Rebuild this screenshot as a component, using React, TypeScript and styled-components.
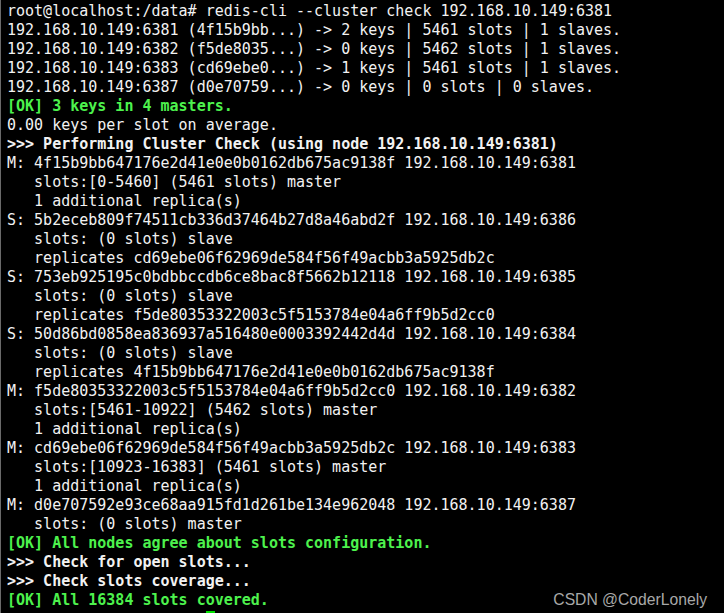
import React from "react";
import styled, { createGlobalStyle } from "styled-components";

const Global = createGlobalStyle`
  html, body { margin: 0; padding: 0; background: #000; }
  body { width: 724px; height: 613px; overflow: hidden; }
`;

const Terminal = styled.div`
  position: relative;
  width: 724px;
  height: 613px;
  box-sizing: border-box;
  background: #000;
  padding: 2px 0 0 6px;
  border-left: 1px solid #6a6a6a;
  overflow: hidden;
`;

const Output = styled.pre`
  margin: 0;
  font-family: "DejaVu Sans Mono", "Liberation Mono", monospace;
  font-size: 15px;
  line-height: 19px;
  color: #f2f2f2;
  white-space: pre;
`;

type Kind = "plain" | "bold" | "ok";

const Line = styled.div<{ $kind: Kind }>`
  height: 19px;
  color: ${(p) => (p.$kind === "ok" ? "#4df24d" : "#f2f2f2")};
  font-weight: ${(p) => (p.$kind === "plain" ? 400 : 700)};
`;

const Cursor = styled.span`
  display: inline-block;
  width: 9px;
  height: 19px;
  vertical-align: top;
  margin-top: 1px;
  background: #00e000;
`;

const Watermark = styled.div`
  position: absolute;
  right: 17px;
  bottom: 4px;
  font-family: "Liberation Sans", Arial, sans-serif;
  font-size: 15.7px;
  color: #a8a8a8;
`;

const lines: { kind: Kind; text: string }[] = [
  { kind: "plain", text: "root@localhost:/data# redis-cli --cluster check 192.168.10.149:6381" },
  { kind: "plain", text: "192.168.10.149:6381 (4f15b9bb...) -> 2 keys | 5461 slots | 1 slaves." },
  { kind: "plain", text: "192.168.10.149:6382 (f5de8035...) -> 0 keys | 5462 slots | 1 slaves." },
  { kind: "plain", text: "192.168.10.149:6383 (cd69ebe0...) -> 1 keys | 5461 slots | 1 slaves." },
  { kind: "plain", text: "192.168.10.149:6387 (d0e70759...) -> 0 keys | 0 slots | 0 slaves." },
  { kind: "ok", text: "[OK] 3 keys in 4 masters." },
  { kind: "plain", text: "0.00 keys per slot on average." },
  { kind: "bold", text: ">>> Performing Cluster Check (using node 192.168.10.149:6381)" },
  { kind: "plain", text: "M: 4f15b9bb647176e2d41e0e0b0162db675ac9138f 192.168.10.149:6381" },
  { kind: "plain", text: "   slots:[0-5460] (5461 slots) master" },
  { kind: "plain", text: "   1 additional replica(s)" },
  { kind: "plain", text: "S: 5b2eceb809f74511cb336d37464b27d8a46abd2f 192.168.10.149:6386" },
  { kind: "plain", text: "   slots: (0 slots) slave" },
  { kind: "plain", text: "   replicates cd69ebe06f62969de584f56f49acbb3a5925db2c" },
  { kind: "plain", text: "S: 753eb925195c0bdbbccdb6ce8bac8f5662b12118 192.168.10.149:6385" },
  { kind: "plain", text: "   slots: (0 slots) slave" },
  { kind: "plain", text: "   replicates f5de80353322003c5f5153784e04a6ff9b5d2cc0" },
  { kind: "plain", text: "S: 50d86bd0858ea836937a516480e0003392442d4d 192.168.10.149:6384" },
  { kind: "plain", text: "   slots: (0 slots) slave" },
  { kind: "plain", text: "   replicates 4f15b9bb647176e2d41e0e0b0162db675ac9138f" },
  { kind: "plain", text: "M: f5de80353322003c5f5153784e04a6ff9b5d2cc0 192.168.10.149:6382" },
  { kind: "plain", text: "   slots:[5461-10922] (5462 slots) master" },
  { kind: "plain", text: "   1 additional replica(s)" },
  { kind: "plain", text: "M: cd69ebe06f62969de584f56f49acbb3a5925db2c 192.168.10.149:6383" },
  { kind: "plain", text: "   slots:[10923-16383] (5461 slots) master" },
  { kind: "plain", text: "   1 additional replica(s)" },
  { kind: "plain", text: "M: d0e707592e93ce68aa915fd1d261be134e962048 192.168.10.149:6387" },
  { kind: "plain", text: "   slots: (0 slots) master" },
  { kind: "ok", text: "[OK] All nodes agree about slots configuration." },
  { kind: "bold", text: ">>> Check for open slots..." },
  { kind: "bold", text: ">>> Check slots coverage..." },
  { kind: "ok", text: "[OK] All 16384 slots covered." },
];

export default function App() {
  return (
    <>
      <Global />
      <Terminal>
        <Output>
          {lines.map((l, i) => (
            <Line key={i} $kind={l.kind}>
              {l.text}
            </Line>
          ))}
          <Line $kind="plain">
            {"                      "}
            <Cursor />
          </Line>
        </Output>
        <Watermark>CSDN @CoderLonely</Watermark>
      </Terminal>
    </>
  );
}
